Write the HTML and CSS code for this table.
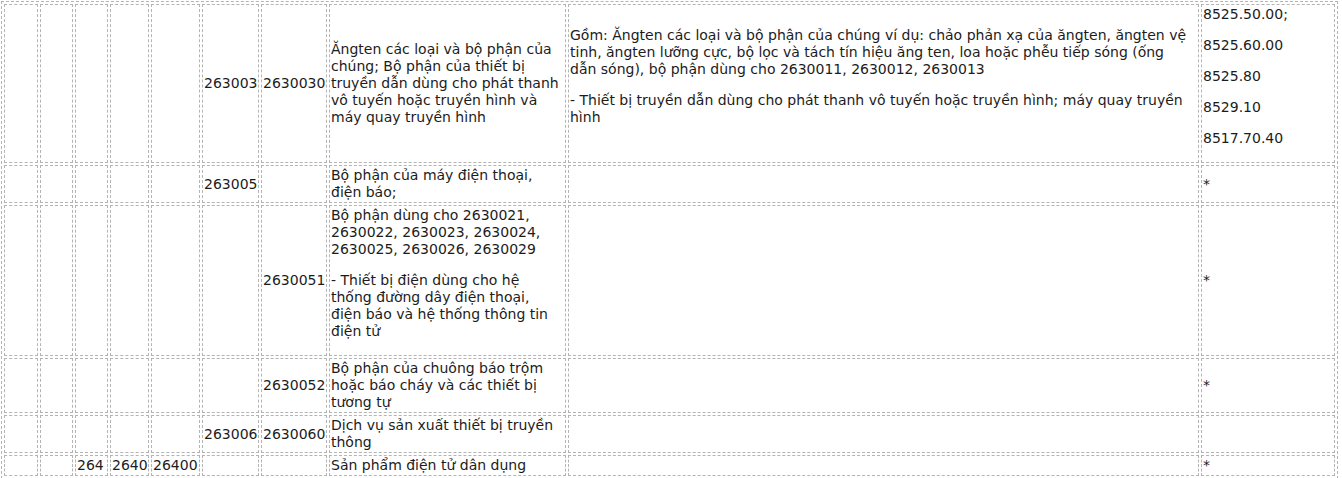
FILE: index.html
```html
<!DOCTYPE html>
<html lang="vi">
<head>
    <meta charset="UTF-8">
    <title>Hệ thống ngành sản phẩm</title>
    <link rel="stylesheet" href="styles.css">
</head>
<body>

    <table class="codes">
        <tr>
            <td class="c1"></td>
            <td class="c2"></td>
            <td class="c3"></td>
            <td class="c4"></td>
            <td class="c5"></td>
            <td class="c6">263003</td>
            <td class="c7">2630030</td>
            <td class="c8">Ăngten các loại và bộ phận của chúng; Bộ phận của thiết bị truyền dẫn dùng cho phát thanh vô tuyến hoặc truyền hình và máy quay truyền hình</td>
            <td class="c9 note">
                <p>Gồm: Ăngten các loại và bộ phận của chúng ví dụ: chảo phản xạ của ăngten, ăngten vệ tinh, ăngten lưỡng cực, bộ lọc và tách tín hiệu ăng ten, loa hoặc phễu tiếp sóng (ống<br>dẫn sóng), bộ phận dùng cho 2630011, 2630012, 2630013</p>
                <p>- Thiết bị truyền dẫn dùng cho phát thanh vô tuyến hoặc truyền hình; máy quay truyền hình</p>
            </td>
            <td class="c10 hs">
                <p>8525.50.00;</p>
                <p>8525.60.00</p>
                <p>8525.80</p>
                <p>8529.10</p>
                <p>8517.70.40</p>
            </td>
        </tr>
        <tr>
            <td></td><td></td><td></td><td></td><td></td>
            <td>263005</td>
            <td></td>
            <td>Bộ phận của máy điện thoại, điện báo;</td>
            <td></td>
            <td>*</td>
        </tr>
        <tr>
            <td></td><td></td><td></td><td></td><td></td>
            <td></td>
            <td>2630051</td>
            <td class="note">
                <p>Bộ phận dùng cho 2630021, 2630022, 2630023, 2630024, 2630025, 2630026, 2630029</p>
                <p>- Thiết bị điện dùng cho hệ thống đường dây điện thoại, điện báo và hệ thống thông tin điện tử</p>
            </td>
            <td></td>
            <td>*</td>
        </tr>
        <tr>
            <td></td><td></td><td></td><td></td><td></td>
            <td></td>
            <td>2630052</td>
            <td>Bộ phận của chuông báo trộm hoặc báo cháy và các thiết bị tương tự</td>
            <td></td>
            <td>*</td>
        </tr>
        <tr>
            <td></td><td></td><td></td><td></td><td></td>
            <td>263006</td>
            <td>2630060</td>
            <td>Dịch vụ sản xuất thiết bị truyền thông</td>
            <td></td>
            <td></td>
        </tr>
        <tr>
            <td></td><td></td>
            <td>264</td>
            <td>2640</td>
            <td>26400</td>
            <td></td>
            <td></td>
            <td>Sản phẩm điện tử dân dụng</td>
            <td></td>
            <td>*</td>
        </tr>
    </table>

</body>
</html>
```

FILE: styles.css
```css
body {
    margin: 0;
    background: #fff;
    color: #1c1c1c;
    font-family: "DejaVu Sans", Verdana, sans-serif;
    font-size: 14px;
    line-height: 17px;
}

.codes {
    margin: 1px 0 0 1px;
    width: 1336px;
    table-layout: fixed;
    border: 1px dashed #b4b4b4;
    border-spacing: 2px;
}

.codes td {
    box-sizing: border-box;
    border: 1px dashed #b4b4b4;
    padding: 1px;
    vertical-align: middle;
    text-align: left;
}

.codes p {
    margin: 0 0 1em;
}

/* column widths, border to border */
.c1 { width: 34px; }
.c2 { width: 33px; }
.c3 { width: 33px; }
.c4 { width: 39px; }
.c5 { width: 49px; }
.c6 { width: 57px; }
.c7 { width: 66px; }
.c8 { width: 237px; }
.c9 { width: 631px; }
.c10 { width: 134px; }
```
